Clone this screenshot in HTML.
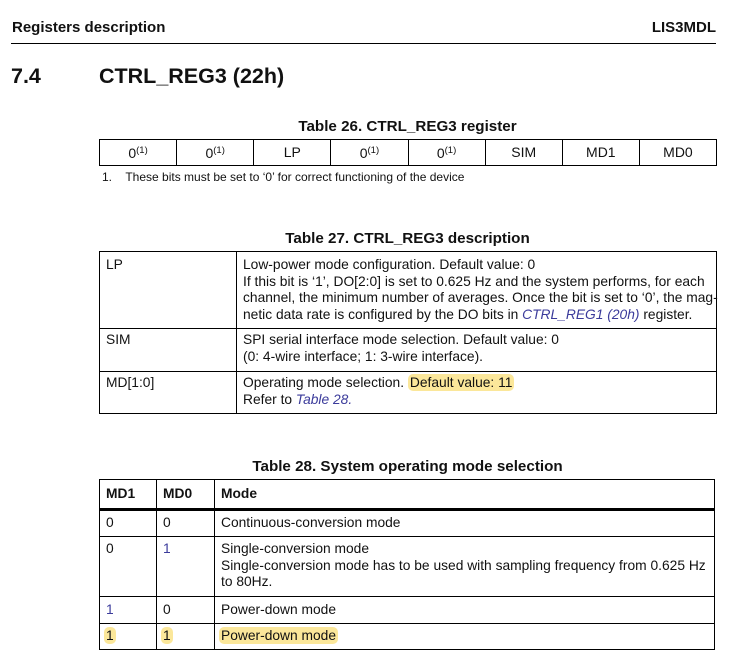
<!DOCTYPE html>
<html><head><style>
body{margin:0;width:730px;height:662px;background:#fff;font-family:"Liberation Sans",Arial,sans-serif;color:#111;position:relative;overflow:hidden}
.a{position:absolute;white-space:nowrap}
.b{font-weight:bold}
table{position:absolute;border-collapse:collapse;font-size:13.8px;table-layout:fixed}
td{border:1px solid #000;padding:0 0 0 6px;vertical-align:top;line-height:16.5px;white-space:nowrap}
.lk{color:#3b3b9b;font-style:italic}
.hl{background:#fbe79a;border-radius:5px;padding:1px 2px}
.t26 td{text-align:center;padding:0;vertical-align:middle;font-size:14px}
sup{font-size:9.5px;vertical-align:5px}
</style></head><body>
<div class="a b" style="left:12px;top:19px;font-size:15px">Registers description</div>
<div class="a b" style="right:14px;top:19px;font-size:15px">LIS3MDL</div>
<div style="position:absolute;left:11px;top:43px;width:705px;height:1px;background:#000"></div>
<div class="a b" style="left:11px;top:64px;font-size:21.5px">7.4</div>
<div class="a b" style="left:99px;top:64px;font-size:21.5px">CTRL_REG3 (22h)</div>
<div class="a b" style="left:99px;width:617px;text-align:center;top:118px;font-size:15.2px">Table 26. CTRL_REG3 register</div>
<table class="t26" style="left:99px;top:139px;width:618px;height:27px">
<tr><td>0<sup>(1)</sup></td><td>0<sup>(1)</sup></td><td>LP</td><td>0<sup>(1)</sup></td><td>0<sup>(1)</sup></td><td>SIM</td><td>MD1</td><td>MD0</td></tr></table>
<div class="a" style="left:102px;top:170px;font-size:12px">1.&nbsp;&nbsp;&nbsp;&nbsp;These bits must be set to ‘0’ for correct functioning of the device</div>
<div class="a b" style="left:99px;width:617px;text-align:center;top:230px;font-size:15.2px">Table 27. CTRL_REG3 description</div>
<table style="left:99px;top:251px;width:618px">
<col style="width:137px"><col>
<tr style="height:77px"><td style="padding-top:5px">LP</td><td style="padding-top:5px">Low-power mode configuration. Default value: 0<br>If this bit is ‘1’, DO[2:0] is set to 0.625 Hz and the system performs, for each<br>channel, the minimum number of averages. Once the bit is set to ‘0’, the mag-<br>netic data rate is configured by the DO bits in <span class="lk">CTRL_REG1 (20h)</span> register.</td></tr>
<tr style="height:43px"><td style="padding-top:3px">SIM</td><td style="padding-top:3px">SPI serial interface mode selection. Default value: 0<br>(0: 4-wire interface; 1: 3-wire interface).</td></tr>
<tr style="height:42px"><td style="padding-top:3px">MD[1:0]</td><td style="padding-top:3px">Operating mode selection. <span class="hl">Default value: 11</span><br>Refer to <span class="lk">Table 28.</span></td></tr>
</table>
<div class="a b" style="left:99px;width:617px;text-align:center;top:458px;font-size:15.2px">Table 28. System operating mode selection</div>
<table style="left:99px;top:479px;width:616px">
<col style="width:57px"><col style="width:58px"><col>
<tr style="height:30px"><td class="b" style="vertical-align:middle;border-bottom:3px solid #000">MD1</td><td class="b" style="vertical-align:middle;border-bottom:3px solid #000">MD0</td><td class="b" style="vertical-align:middle;border-bottom:3px solid #000">Mode</td></tr>
<tr style="height:27px"><td style="vertical-align:middle">0</td><td style="vertical-align:middle">0</td><td style="vertical-align:middle">Continuous-conversion mode</td></tr>
<tr style="height:60px"><td style="padding-top:4px">0</td><td style="padding-top:4px"><span class="lk" style="font-style:normal">1</span></td><td style="padding-top:4px">Single-conversion mode<br>Single-conversion mode has to be used with sampling frequency from 0.625 Hz<br>to 80Hz.</td></tr>
<tr style="height:27px"><td style="vertical-align:middle"><span class="lk" style="font-style:normal">1</span></td><td style="vertical-align:middle">0</td><td style="vertical-align:middle">Power-down mode</td></tr>
<tr style="height:26px"><td style="vertical-align:middle;padding-left:4px"><span class="hl">1</span></td><td style="vertical-align:middle;padding-left:4px"><span class="hl">1</span></td><td style="vertical-align:middle;padding-left:4px"><span class="hl">Power-down mode</span></td></tr>
</table>
</body></html>
